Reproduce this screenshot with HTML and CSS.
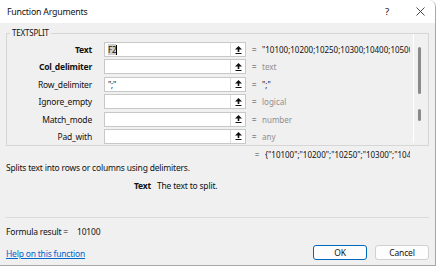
FILE: index.html
```html
<!DOCTYPE html>
<html>
<head>
<meta charset="utf-8">
<link rel="stylesheet" href="styles.css">
</head>
<body>
<div class="window">
  <div class="titlebar">
    <span class="title">Function Arguments</span>
    <span class="help">?</span>
    <span class="close"><svg width="9" height="9" viewBox="0 0 9 9"><path d="M0.5 0.5 L8.5 8.5 M8.5 0.5 L0.5 8.5" stroke="#333" stroke-width="0.9" fill="none"/></svg></span>
  </div>
  <div class="content">
    <div class="group">
      <span class="legend">TEXTSPLIT</span>
      <div class="args">
        <div class="label bold">Text</div>
        <div class="box"><span class="field"><span class="sel">F2</span><span class="caret"></span></span><span class="pick"><svg width="7" height="8" viewBox="0 0 7 8"><path d="M3.5 0 L7 3.5 L4.3 3.5 L4.3 6 L2.7 6 L2.7 3.5 L0 3.5 Z" fill="#111"/><rect x="0.5" y="7" width="6" height="1" fill="#111"/></svg></span></div>
        <div class="eq">=</div>
        <div class="val">"10100;10200;10250;10300;10400;10500;10600"</div>

        <div class="label bold">Col_delimiter</div>
        <div class="box"><span class="field"></span><span class="pick"><svg width="7" height="8" viewBox="0 0 7 8"><path d="M3.5 0 L7 3.5 L4.3 3.5 L4.3 6 L2.7 6 L2.7 3.5 L0 3.5 Z" fill="#111"/><rect x="0.5" y="7" width="6" height="1" fill="#111"/></svg></span></div>
        <div class="eq">=</div>
        <div class="val hint">text</div>

        <div class="label">Row_delimiter</div>
        <div class="box"><span class="field">";"</span><span class="pick"><svg width="7" height="8" viewBox="0 0 7 8"><path d="M3.5 0 L7 3.5 L4.3 3.5 L4.3 6 L2.7 6 L2.7 3.5 L0 3.5 Z" fill="#111"/><rect x="0.5" y="7" width="6" height="1" fill="#111"/></svg></span></div>
        <div class="eq">=</div>
        <div class="val">";"</div>

        <div class="label">Ignore_empty</div>
        <div class="box"><span class="field"></span><span class="pick"><svg width="7" height="8" viewBox="0 0 7 8"><path d="M3.5 0 L7 3.5 L4.3 3.5 L4.3 6 L2.7 6 L2.7 3.5 L0 3.5 Z" fill="#111"/><rect x="0.5" y="7" width="6" height="1" fill="#111"/></svg></span></div>
        <div class="eq">=</div>
        <div class="val hint">logical</div>

        <div class="label">Match_mode</div>
        <div class="box"><span class="field"></span><span class="pick"><svg width="7" height="8" viewBox="0 0 7 8"><path d="M3.5 0 L7 3.5 L4.3 3.5 L4.3 6 L2.7 6 L2.7 3.5 L0 3.5 Z" fill="#111"/><rect x="0.5" y="7" width="6" height="1" fill="#111"/></svg></span></div>
        <div class="eq">=</div>
        <div class="val hint">number</div>

        <div class="label">Pad_with</div>
        <div class="box"><span class="field"></span><span class="pick"><svg width="7" height="8" viewBox="0 0 7 8"><path d="M3.5 0 L7 3.5 L4.3 3.5 L4.3 6 L2.7 6 L2.7 3.5 L0 3.5 Z" fill="#111"/><rect x="0.5" y="7" width="6" height="1" fill="#111"/></svg></span></div>
        <div class="eq">=</div>
        <div class="val hint">any</div>
      </div>
      <div class="scroll">
        <span class="thumb big"></span>
        <span class="thumb small"></span>
      </div>
    </div>
    <div class="result"><span class="eq2">=</span><span class="resval">{"10100";"10200";"10250";"10300";"10400";"10500"}</span></div>
    <div class="desc">Splits text into rows or columns using delimiters.</div>
    <div class="argdesc"><b>Text</b><span>The text to split.</span></div>
    <div class="sep"></div>
    <div class="formula"><span>Formula result =</span><span class="fval">10100</span></div>
    <div class="footer">
      <a class="link" href="#">Help on this function</a>
      <div class="buttons">
        <button class="btn ok">OK</button>
        <button class="btn">Cancel</button>
      </div>
    </div>
  </div>
</div>
</body>
</html>
```

FILE: styles.css
```css
* { box-sizing: border-box; }
html, body { margin: 0; padding: 0; background: #ffffff; }
body {
  font-family: "Noto Sans", "Open Sans", sans-serif;
  font-size: 8.5px;
  letter-spacing: -0.2px;
  color: #111111;
}
.window {
  width: 436px;
  height: 266px;
  background: #f0f0f0;
  border-right: 1px solid #a8a8a8;
  border-bottom: 1px solid #a8a8a8;
  border-top-right-radius: 7px;
  overflow: hidden;
  display: flex;
  flex-direction: column;
}
.titlebar {
  height: 23px;
  background: #ffffff;
  display: flex;
  align-items: center;
  padding-left: 7px;
  flex: none;
}
.title { font-size: 8.8px; flex: 1; }
.help { width: 12px; text-align: center; font-size: 9.5px; margin-right: 23px; }
.close { width: 9px; height: 9px; margin-right: 10px; display: flex; }
.content {
  padding: 0 6px 0 6px;
  display: flex;
  flex-direction: column;
}
.group {
  position: relative;
  margin-top: 10px;
  height: 113px;
  border: 1px solid #d6d6d6;
  display: flex;
  padding: 8px 0 0 0;
}
.legend {
  position: absolute;
  top: -7px;
  left: 3px;
  padding: 0 2px;
  background: #f0f0f0;
  line-height: 12px;
  font-size: 8px;
}
.args {
  display: grid;
  grid-template-columns: 91px 148px 16px 148px;
  grid-auto-rows: 17.4px;
  align-content: start;
}
.label {
  text-align: right;
  padding-right: 6px;
  line-height: 15px;
  white-space: nowrap;
}
.bold { font-weight: bold; }
.args > .box { margin-left: 6px; }
.box {
  height: 15px;
  background: #ffffff;
  border: 1px solid #c8c8c8;
  display: flex;
}
.field {
  flex: 1;
  line-height: 13px;
  padding-left: 3px;
  display: flex;
  align-items: center;
  font-size: 8px;
}
.sel { background: #cfcfcf; line-height: 11px; }
.caret { width: 1px; height: 10px; background: #000; }
.pick {
  width: 15px;
  border-left: 1px solid #dcdcdc;
  display: flex;
  align-items: center;
  justify-content: center;
}
.eq {
  text-align: center;
  line-height: 15px;
  color: #444;
}
.val {
  line-height: 15px;
  white-space: nowrap;
  overflow: hidden;
  font-size: 8px;
  letter-spacing: 0;
}
.hint { color: #8f8f8f; }
.scroll {
  width: 18px;
  margin-left: 3px;
  margin-top: -8px;
  margin-bottom: 2px;
  border-left: 1px solid #ffffff;
  display: flex;
  flex-direction: column;
  align-items: center;
  padding-top: 13px;
  gap: 15px;
}
.thumb { width: 3px; background: #8a8a8a; border-radius: 2px; margin-left: -4px; }
.thumb.big { height: 47px; }
.thumb.small { height: 12px; }
.result {
  margin-top: 3px;
  line-height: 12px;
  display: flex;
  padding-left: 243px;
  white-space: nowrap;
  overflow: hidden;
  font-size: 8px;
  letter-spacing: 0;
}
.eq2 { width: 16px; text-align: center; color: #444; }
.resval { width: 145px; overflow: hidden; }
.desc { margin-top: 1px; line-height: 12px; }
.argdesc { margin-top: 6px; line-height: 12px; padding-left: 128px; display: flex; gap: 6px; }
.sep { margin-top: 25px; height: 1px; background: #dadada; }
.formula { margin-top: 8px; line-height: 12px; display: flex; gap: 9px; }
.footer {
  margin-top: 6px;
  display: flex;
  align-items: center;
  justify-content: space-between;
}
.link { color: #0066cc; text-decoration: underline; line-height: 12px; margin-top: 4px; }
.buttons { display: flex; gap: 8px; }
.btn {
  font-family: "Noto Sans", "Open Sans", sans-serif;
  font-size: 8.5px;
  letter-spacing: -0.2px;
  width: 54px;
  height: 15px;
  padding: 0;
  line-height: 13px;
  background: #fdfdfd;
  border: 1px solid #d0d0d0;
  border-radius: 3px;
  color: #111111;
}
.btn.ok { border-color: #0067c0; }
```
